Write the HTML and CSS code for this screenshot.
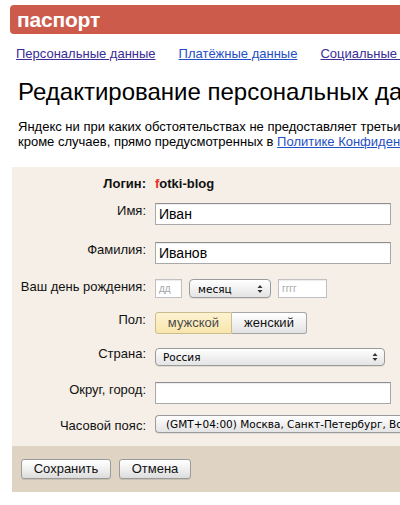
FILE: index.html
```html
<!DOCTYPE html>
<html lang="ru">
<head>
<meta charset="utf-8">
<title>Паспорт</title>
<link rel="stylesheet" href="styles.css">
</head>
<body>
<div class="page">
  <div class="logo-bar"><span class="logo">паспорт</span></div>
  <nav class="tabs">
    <a class="tab visited" href="#">Персональные данные</a>
    <a class="tab" href="#">Платёжные данные</a>
    <a class="tab visited" href="#">Социальные сети</a>
  </nav>
  <h1 class="title">Редактирование персональных данных</h1>
  <p class="note">Яндекс ни при каких обстоятельствах не предоставляет третьим лицам ваши данные,<br>кроме случаев, прямо предусмотренных в <a href="#">Политике Конфиденциальности</a>.</p>

  <form class="panel">
    <div class="fields">
      <div class="row row-login">
        <div class="label bold">Логин:</div>
        <div class="login"><span class="red">f</span>otki-blog</div>
      </div>
      <div class="row row-name">
        <div class="label">Имя:</div>
        <div class="input wide">Иван</div>
      </div>
      <div class="row row-surname">
        <div class="label">Фамилия:</div>
        <div class="input wide">Иванов</div>
      </div>
      <div class="row row-birth">
        <div class="label">Ваш день рождения:</div>
        <div class="date">
          <div class="input small dd">дд</div>
          <div class="select month"><span>месяц</span><svg class="arrows" width="6" height="10" viewBox="0 0 6 10"><path d="M0.5 4 L3 1 L5.5 4 Z M0.5 6 L3 9 L5.5 6 Z" fill="#333"/></svg></div>
          <div class="input small yyyy">гггг</div>
        </div>
      </div>
      <div class="row row-gender">
        <div class="label">Пол:</div>
        <div class="seg">
          <div class="seg-btn on">мужской</div>
          <div class="seg-btn">женский</div>
        </div>
      </div>
      <div class="row row-country">
        <div class="label">Страна:</div>
        <div class="select country"><span>Россия</span><svg class="arrows" width="6" height="10" viewBox="0 0 6 10"><path d="M0.5 4 L3 1 L5.5 4 Z M0.5 6 L3 9 L5.5 6 Z" fill="#333"/></svg></div>
      </div>
      <div class="row row-city">
        <div class="label">Округ, город:</div>
        <div class="input wide"></div>
      </div>
      <div class="row row-tz">
        <div class="label">Часовой пояс:</div>
        <div class="select tz"><span>(GMT+04:00) Москва, Санкт-Петербург, Волгоград</span></div>
      </div>
    </div>
    <div class="actions">
      <div class="btn save">Сохранить</div>
      <div class="btn cancel">Отмена</div>
    </div>
  </form>
</div>
</body>
</html>
```

FILE: styles.css
```css
html, body {
  margin: 0;
  padding: 0;
  overflow: hidden;
  background: #fff;
}
body {
  font-family: "Liberation Sans", Arial, sans-serif;
  color: #000;
  width: 400px;
  height: 505px;
}
.page {
  width: 400px;
  overflow: hidden;
}
.logo-bar {
  margin: 5px 0 0 10px;
  width: 420px;
  height: 29px;
  background: #cd5b4c;
  border-radius: 4px 0 0 4px;
  display: flex;
  align-items: center;
  padding-left: 7px;
  box-sizing: border-box;
}
.logo {
  color: #fff;
  font-weight: bold;
  font-size: 21px;
  line-height: 29px;
  letter-spacing: -0.2px;
}
.tabs {
  display: flex;
  gap: 23px;
  margin: 12px 0 0 16px;
  white-space: nowrap;
  font-size: 13px;
  line-height: 16px;
}
.tab {
  color: #1f4fc4;
  text-decoration: underline;
}
.tab.visited {
  color: #3a2d95;
}
.title {
  margin: 16px 0 0 18px;
  font-size: 24px;
  font-weight: normal;
  line-height: 28px;
  white-space: nowrap;
}
.note {
  margin: 13px 0 0 18px;
  font-size: 13px;
  line-height: 15px;
  white-space: nowrap;
}
.note a {
  color: #1f4fc4;
}
.panel {
  margin: 18px 0 0 12px;
  width: 420px;
  display: block;
}
.fields {
  background: #f5efe7;
  padding: 9px 0 12px 0;
}
.row {
  display: flex;
  align-items: flex-start;
  gap: 9px;
}
.label {
  width: 134px;
  flex: none;
  text-align: right;
  font-size: 13px;
  line-height: 16px;
  color: #111;
  white-space: nowrap;
}
.bold { font-weight: bold; }
.login {
  font-size: 13px;
  line-height: 16px;
  font-weight: bold;
  color: #111;
}
.red { color: #e8302a; }
.row-name { margin-top: 11px; }
.row-surname { margin-top: 17px; }
.row-birth { margin-top: 15px; }
.row-gender { margin-top: 14px; }
.row-country { margin-top: 14px; }
.row-country .label { margin-top: -2px; }
.row-city { margin-top: 16px; }
.row-tz { margin-top: 11px; }
.row-tz .label { margin-top: 3px; }
.input {
  box-sizing: border-box;
  height: 22px;
  background: #fff;
  border: 1px solid #a9a9a9;
  border-top-color: #8e8e8e;
  box-shadow: inset 0 1px 1px rgba(0,0,0,0.08);
  font-size: 14px;
  line-height: 20px;
  padding: 0 3px;
  color: #000;
}
.input.wide { width: 236px; }
.date {
  display: flex;
  gap: 7px;
  align-items: center;
}
.input.small {
  height: 19px;
  font-size: 10px;
  line-height: 18px;
  color: #a8a8a8;
  padding: 0 3px;
  border-color: #c0c0c0;
}
.dd { width: 27px; }
.yyyy { width: 49px; }
.select {
  box-sizing: border-box;
  display: flex;
  align-items: center;
  justify-content: space-between;
  border: 1px solid #9b9b9b;
  border-radius: 4px;
  background: linear-gradient(#ffffff, #f1f1f1 50%, #e4e4e4);
  box-shadow: 0 1px 0 rgba(0,0,0,0.08);
  font-family: "DejaVu Sans", sans-serif;
  font-size: 10.5px;
  color: #000;
  white-space: nowrap;
  overflow: hidden;
}
.select.month {
  width: 82px;
  height: 19px;
  padding: 0 7px 0 8px;
}
.select.country {
  width: 230px;
  height: 18px;
  padding: 0 6px 0 7px;
}
.select.tz {
  width: 260px;
  height: 18px;
  padding: 0 6px 0 10px;
  justify-content: flex-start;
  border-right: none;
  border-radius: 4px 0 0 4px;
}
.arrows { flex: none; }
.seg {
  display: flex;
}
.seg-btn {
  box-sizing: border-box;
  height: 22px;
  font-size: 13px;
  line-height: 20px;
  text-align: center;
  border: 1px solid #a5a5a5;
  background: linear-gradient(#ffffff, #f2f2f2 50%, #e2e2e2);
  color: #111;
}
.seg-btn:first-child {
  width: 77px;
  border-radius: 3px 0 0 3px;
}
.seg-btn:last-child {
  width: 75px;
  border-left: none;
  border-radius: 0 3px 3px 0;
}
.seg-btn.on {
  background: linear-gradient(#fdf3d2, #f9e6ac);
  border-color: #cbbd90;
  color: #4a4a4a;
}
.actions {
  background: #dfd4c4;
  height: 46px;
  padding: 13px 0 0 9px;
  box-sizing: border-box;
  display: flex;
  gap: 8px;
  align-items: flex-start;
}
.btn {
  box-sizing: border-box;
  height: 20px;
  font-size: 13px;
  line-height: 18px;
  text-align: center;
  border: 1px solid #9a9a9a;
  border-radius: 3px;
  background: linear-gradient(#ffffff, #f0f0f0 50%, #dcdcdc);
  box-shadow: 0 1px 0 rgba(0,0,0,0.1);
  color: #111;
}
.btn.save { width: 90px; }
.btn.cancel { width: 72px; }
```
